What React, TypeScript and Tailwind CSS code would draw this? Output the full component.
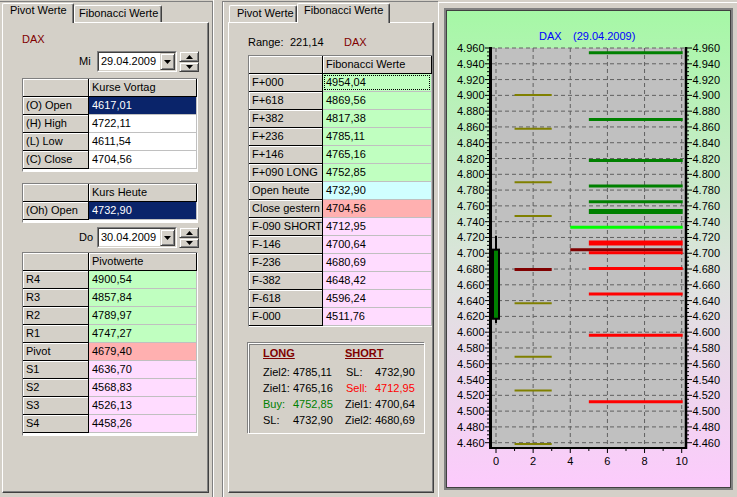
import React from 'react';

type Row = { label: string; value: string; bg: string; selected?: boolean; focus?: boolean };

const RAISED =
  'bg-[#d4d0c8] border border-[#d4d0c8] border-r-[#404040] border-b-[#404040] shadow-[inset_1px_1px_0_#ffffff,inset_-1px_-1px_0_#808080]';

function Arrow({ dir }: { dir: 'up' | 'down' }) {
  return (
    <svg width="7" height="4" viewBox="0 0 7 4" className="block">
      <polygon points={dir === 'down' ? '0,0 7,0 3.5,4' : '0,4 7,4 3.5,0'} fill="#000" />
    </svg>
  );
}

function DateRow({ label, date, className }: { label: string; date: string; className: string }) {
  return (
    <div className={`flex items-center h-[21px] ml-[76px] ${className}`}>
      <span className="w-[18px] leading-[13px]">{label}</span>
      <div className="w-[80px] h-[21px] border border-[#808080] border-b-white border-r-white">
        <div className="h-full border border-[#404040] border-b-[#d4d0c8] border-r-[#d4d0c8] bg-white flex items-center">
          <span className="flex-1 pl-[2px] leading-[13px]">{date}</span>
          <div className={`w-[15px] h-[17px] flex items-center justify-center ${RAISED}`}>
            <Arrow dir="down" />
          </div>
        </div>
      </div>
      <div className="ml-[2px] w-[20px] h-[21px] flex flex-col">
        <div className={`h-[11px] flex items-center justify-center ${RAISED}`}>
          <Arrow dir="up" />
        </div>
        <div className={`h-[10px] flex items-center justify-center ${RAISED}`}>
          <Arrow dir="down" />
        </div>
      </div>
    </div>
  );
}

function Grid({
  header,
  rows,
  c1,
  c2,
  className,
  open,
}: {
  header: string;
  rows: Row[];
  c1: string;
  c2: string;
  className: string;
  open?: boolean;
}) {
  const fixed =
    'h-[18px] shrink-0 bg-[#d4d0c8] border-r border-b border-black shadow-[inset_1px_1px_0_#ffffff] pl-[3px] leading-[17px] whitespace-nowrap overflow-hidden';
  return (
    <div
      className={`bg-white border-t border-l border-[#808080] ${
        open ? 'border-b border-b-white' : 'border-b border-r border-b-white border-r-white pb-[2px]'
      } ${className}`}
    >
      <div className="flex">
        <div className={`${fixed} ${c1}`}></div>
        <div className={`${fixed} ${c2}`}>{header}</div>
      </div>
      {rows.map((r) => (
        <div className="flex" key={r.label}>
          <div className={`${fixed} ${c1}`}>{r.label}</div>
          <div
            className={`relative h-[18px] shrink-0 border-r border-b border-[#c0c0c0] pl-[3px] leading-[17px] ${c2} ${
              r.selected ? 'bg-[#0a246a] text-white' : r.bg
            }`}
          >
            {r.value}
            {r.focus ? <div className="absolute inset-[1px] border border-dotted border-black"></div> : null}
          </div>
        </div>
      ))}
    </div>
  );
}

function TabActive({ label, w, pl }: { label: string; w: string; pl: string }) {
  return (
    <div
      className={`relative z-10 -mb-px h-[20px] ${w} ${pl} bg-[#d4d0c8] border-t border-l border-white border-r border-r-[#404040] shadow-[inset_-1px_0_0_#808080] rounded-tl-[2px] rounded-tr-[2px] leading-[13px] whitespace-nowrap`}
    >
      {label}
    </div>
  );
}

function TabInactive({ label, w, pl }: { label: string; w: string; pl: string }) {
  return (
    <div
      className={`h-[17px] ${w} ${pl} pt-[1px] bg-[#d4d0c8] border-t border-l border-white border-r border-r-[#404040] shadow-[inset_-1px_0_0_#808080] rounded-tl-[2px] rounded-tr-[2px] leading-[13px] whitespace-nowrap`}
    >
      {label}
    </div>
  );
}

const PAGE =
  'h-[471px] border border-white border-r-[#404040] border-b-[#404040] shadow-[inset_-1px_-1px_0_#808080]';

const G = 'bg-[#c0ffc0]';
const P = 'bg-[#ffdcff]';
const R = 'bg-[#ffb0b0]';
const C = 'bg-[#d0ffff]';
const W = 'bg-white';

function Chart() {
  const yv = (v: number) => 48 + (4960 - v) * 0.7894;
  const xv = (u: number) => 496 + u * 18.57;
  const levels: number[] = [];
  for (let v = 4460; v <= 4960; v += 20) levels.push(v);
  const minor: number[] = [];
  for (let v = 4460; v <= 4960; v += 5) if (v % 20 !== 0) minor.push(v);
  const olive = [4900.54, 4857.84, 4789.97, 4747.27, 4636.7, 4568.83, 4526.13, 4458.26];
  const greens: [number, number][] = [
    [4954.04, 3],
    [4869.56, 3],
    [4817.38, 3],
    [4785.11, 3],
    [4765.16, 3],
    [4752.85, 5],
  ];
  const reds: [number, number][] = [
    [4712.95, 5],
    [4700.64, 3],
    [4680.69, 3],
    [4648.42, 3],
    [4596.24, 3],
    [4511.76, 3],
  ];
  const fmt = (v: number) => (v / 1000).toFixed(3);
  return (
    <svg width="283" height="476" className="block" fontFamily="'Liberation Sans', Arial, sans-serif" fontSize="11">
      <defs>
        <linearGradient id="chartbg" x1="0" y1="0" x2="0" y2="1">
          <stop offset="0" stopColor="#a6f8a6" />
          <stop offset="0.55" stopColor="#dde3dd" />
          <stop offset="1" stopColor="#fccbfc" />
        </linearGradient>
      </defs>
      <g transform="translate(-447 -11)">
        <rect x="447" y="11" width="283" height="476" fill="url(#chartbg)" />
        <rect x="491" y="48" width="195" height="400" fill="#c0c0c0" />
        {levels.map((v) => (
          <line key={'h' + v} x1="491" x2="686" y1={yv(v)} y2={yv(v)} stroke="#606060" strokeDasharray="4 3" />
        ))}
        {[0, 2, 4, 6, 8, 10].map((u) => (
          <line key={'v' + u} x1={xv(u)} x2={xv(u)} y1="48" y2="448" stroke="#606060" strokeDasharray="4 3" />
        ))}
        {olive.map((v) => (
          <line key={'o' + v} x1={xv(1)} x2={xv(3)} y1={yv(v)} y2={yv(v)} stroke="#808000" strokeWidth="2" />
        ))}
        <line x1={xv(1)} x2={xv(3)} y1={yv(4679.4)} y2={yv(4679.4)} stroke="#800000" strokeWidth="3" />
        {greens.map(([v, w]) => (
          <line key={'g' + v} x1={xv(5)} x2={xv(10) + 1} y1={yv(v)} y2={yv(v)} stroke="#008000" strokeWidth={w} />
        ))}
        <line x1={xv(4)} x2={xv(10) + 1} y1={yv(4732.9)} y2={yv(4732.9)} stroke="#00ff00" strokeWidth="3" />
        <line x1={xv(4)} x2={xv(10) + 1} y1={yv(4704.56)} y2={yv(4704.56)} stroke="#800000" strokeWidth="3" />
        {reds.map(([v, w]) => (
          <line key={'r' + v} x1={xv(5)} x2={xv(10) + 1} y1={yv(v)} y2={yv(v)} stroke="#ff0000" strokeWidth={w} />
        ))}
        <line x1="496" x2="496" y1={yv(4722.11)} y2={yv(4611.54)} stroke="#000" strokeWidth="2" />
        <rect
          x="493"
          y={yv(4704.56)}
          width="6"
          height={yv(4617.01) - yv(4704.56)}
          fill="#008000"
          stroke="#000"
          strokeWidth="2"
        />
        <line x1="490.5" x2="490.5" y1="47" y2="449" stroke="#000" strokeWidth="3" />
        <line x1="686" x2="686" y1="47" y2="449" stroke="#000" strokeWidth="2.5" />
        <line x1="489" x2="687" y1="448" y2="448" stroke="#000" strokeWidth="2" />
        {levels.map((v) => (
          <g key={'t' + v}>
            <line x1="485" x2="489" y1={yv(v)} y2={yv(v)} stroke="#000" />
            <line x1="687" x2="692" y1={yv(v)} y2={yv(v)} stroke="#000" />
            <text x="484.5" y={yv(v) + 4} textAnchor="end" fill="#000">
              {fmt(v)}
            </text>
            <text x="692.5" y={yv(v) + 4} fill="#000">
              {fmt(v)}
            </text>
          </g>
        ))}
        {minor.map((v) => (
          <g key={'m' + v}>
            <line x1="487" x2="489" y1={yv(v)} y2={yv(v)} stroke="#000" />
            <line x1="687" x2="689" y1={yv(v)} y2={yv(v)} stroke="#000" />
          </g>
        ))}
        {[0, 1, 2, 3, 4, 5, 6, 7, 8, 9, 10].map((u) => (
          <line
            key={'bt' + u}
            x1={xv(u)}
            x2={xv(u)}
            y1="449"
            y2={u % 2 === 0 ? 453 : 451}
            stroke="#000"
          />
        ))}
        {[0, 2, 4, 6, 8, 10].map((u) => (
          <text key={'bl' + u} x={xv(u)} y="465" textAnchor="middle" fill="#000">
            {u}
          </text>
        ))}
        <text x="539" y="40" fill="#0000ff">
          DAX
        </text>
        <text x="573" y="40" fill="#0000ff">
          (29.04.2009)
        </text>
      </g>
    </svg>
  );
}

export default function App() {
  const g1: Row[] = [
    { label: '(O) Open', value: '4617,01', bg: W, selected: true },
    { label: '(H) High', value: '4722,11', bg: W },
    { label: '(L) Low', value: '4611,54', bg: W },
    { label: '(C) Close', value: '4704,56', bg: W },
  ];
  const g2: Row[] = [{ label: '(Oh) Open', value: '4732,90', bg: W, selected: true }];
  const g3: Row[] = [
    { label: 'R4', value: '4900,54', bg: G },
    { label: 'R3', value: '4857,84', bg: G },
    { label: 'R2', value: '4789,97', bg: G },
    { label: 'R1', value: '4747,27', bg: G },
    { label: 'Pivot', value: '4679,40', bg: R },
    { label: 'S1', value: '4636,70', bg: P },
    { label: 'S2', value: '4568,83', bg: P },
    { label: 'S3', value: '4526,13', bg: P },
    { label: 'S4', value: '4458,26', bg: P },
  ];
  const fib: Row[] = [
    { label: 'F+000', value: '4954,04', bg: G, focus: true },
    { label: 'F+618', value: '4869,56', bg: G },
    { label: 'F+382', value: '4817,38', bg: G },
    { label: 'F+236', value: '4785,11', bg: G },
    { label: 'F+146', value: '4765,16', bg: G },
    { label: 'F+090 LONG', value: '4752,85', bg: G },
    { label: 'Open heute', value: '4732,90', bg: C },
    { label: 'Close gestern', value: '4704,56', bg: R },
    { label: 'F-090 SHORT', value: '4712,95', bg: P },
    { label: 'F-146', value: '4700,64', bg: P },
    { label: 'F-236', value: '4680,69', bg: P },
    { label: 'F-382', value: '4648,42', bg: P },
    { label: 'F-618', value: '4596,24', bg: P },
    { label: 'F-000', value: '4511,76', bg: P },
  ];

  return (
    <div className="w-[737px] h-[497px] overflow-hidden bg-[#d4d0c8] flex font-['Liberation_Sans',Arial,sans-serif] text-[11px] text-black">
      {/* Left panel */}
      <div className="w-[213px] h-[496px] mt-[1px] border-t border-r border-[#808080] pl-[2px] pt-[1px] shrink-0">
        <div className="flex items-end h-[19px]">
          <TabActive label="Pivot Werte" w="w-[72px]" pl="pl-[7px]" />
          <TabInactive label="Fibonacci Werte" w="w-[88px]" pl="pl-[4px]" />
        </div>
        <div className={`${PAGE} w-[207px] flex flex-col`}>
          <div className="ml-[19px] mt-[10px] h-[13px] leading-[13px] text-[#800000]">DAX</div>
          <DateRow label="Mi" date="29.04.2009" className="mt-[5px]" />
          <Grid header="Kurse Vortag" rows={g1} c1="w-[66px]" c2="w-[108px]" className="ml-[19px] mt-[6px] w-[176px]" />
          <Grid header="Kurs Heute" rows={g2} c1="w-[66px]" c2="w-[108px]" className="ml-[19px] mt-[11px] w-[176px]" />
          <DateRow label="Do" date="30.04.2009" className="mt-[4px]" />
          <Grid header="Pivotwerte" rows={g3} c1="w-[66px]" c2="w-[108px]" className="ml-[19px] mt-[4px] w-[176px]" />
        </div>
      </div>

      {/* splitter */}
      <div className="w-[9px] h-[497px] border-l border-white shrink-0"></div>

      {/* Middle panel */}
      <div className="w-[216px] h-[496px] mt-[1px] border-t border-l border-[#808080] shadow-[inset_1px_0_0_#ffffff] pl-[5px] pt-[1px] shrink-0">
        <div className="flex items-end h-[19px] pl-[1px]">
          <TabInactive label="Pivot Werte" w="w-[68px]" pl="pl-[7px]" />
          <TabActive label="Fibonacci Werte" w="w-[93px]" pl="pl-[6px]" />
        </div>
        <div className={`${PAGE} w-[206px] flex flex-col`}>
          <div className="ml-[19px] mt-[13px] h-[13px] leading-[13px] flex">
            <span className="w-[42px]">Range:</span>
            <span className="w-[54px]">221,14</span>
            <span className="text-[#800000]">DAX</span>
          </div>
          <Grid header="Fibonacci Werte" rows={fib} c1="w-[74px]" c2="w-[109px]" className="ml-[19px] mt-[6px] w-[184px]" open />
          <div className="ml-[19px] mt-[16px] w-[177px] h-[91px] border border-white shadow-[inset_1px_1px_0_#808080,-1px_-1px_0_#808080] pl-[14px] pt-[1px] flex">
            <div className="w-[82px] flex flex-col leading-[16px]">
              <span className="font-bold underline text-[#800000] mb-[3px]">LONG</span>
              <div className="flex"><span className="w-[30px]">Ziel2:</span><span>4785,11</span></div>
              <div className="flex"><span className="w-[30px]">Ziel1:</span><span>4765,16</span></div>
              <div className="flex text-[#008000]"><span className="w-[30px]">Buy:</span><span>4752,85</span></div>
              <div className="flex"><span className="w-[30px]">SL:</span><span>4732,90</span></div>
            </div>
            <div className="flex flex-col leading-[16px]">
              <span className="font-bold underline text-[#800000] mb-[3px]">SHORT</span>
              <div className="flex"><span className="w-[30px] pl-[1px]">SL:</span><span>4732,90</span></div>
              <div className="flex text-[#ff0000]"><span className="w-[30px] pl-[1px]">Sell:</span><span>4712,95</span></div>
              <div className="flex"><span className="w-[30px]">Ziel1:</span><span>4700,64</span></div>
              <div className="flex"><span className="w-[30px]">Ziel2:</span><span>4680,69</span></div>
            </div>
          </div>
        </div>
      </div>

      {/* Right panel */}
      <div className="w-[299px] h-[495px] mt-[2px] border-l border-t border-white pl-[5px] pt-[5px] shrink-0">
        <div className="w-[289px] h-[482px] border-2 border-[#808080]">
          <div className="border border-[#404040]">
            <Chart />
          </div>
        </div>
      </div>
    </div>
  );
}
